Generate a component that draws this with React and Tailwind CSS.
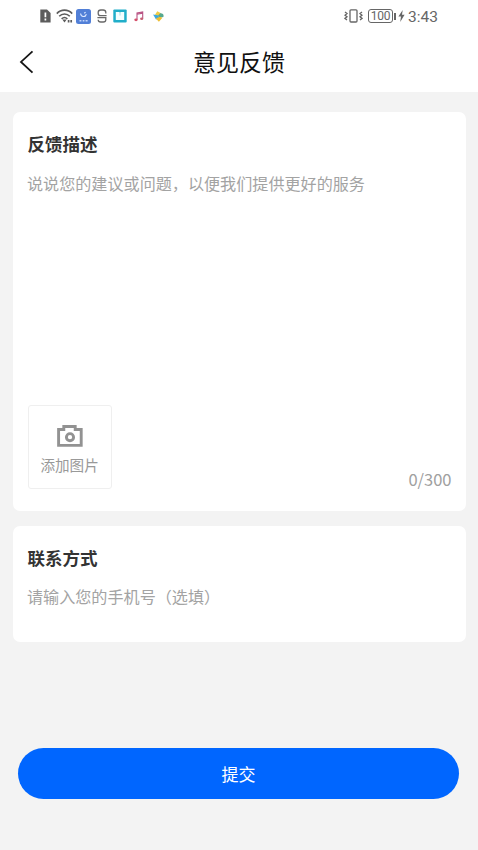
import React, { useState } from "react";

function NotificationIcons() {
  return (
    <div className="flex h-4 items-center text-[#5c5c5c]">
      <svg className="h-[14px] w-[11px]" viewBox="0 0 11 14">
        <path d="M0.3 0.5H7L10.6 4V13.5H0.3Z" fill="currentColor" />
        <path d="M5.4 3.4V8.2M5.4 9.6V11.4" stroke="#fff" strokeWidth="1.7" />
      </svg>
      <svg className="ml-[5px] h-[14px] w-[18px]" viewBox="0 0 18 14" fill="none" stroke="currentColor" strokeWidth="1.6">
        <path d="M0.8 4.6C5 0 12 0 16.2 4.6" />
        <path d="M3.2 7.3C6.2 4.2 10.8 4.2 13.8 7.3" />
        <path d="M5.6 9.8C7.4 8.2 9.6 8.2 11.4 9.8" />
        <path d="M6.3 10.5L8.5 13.5L10.7 10.5Z" fill="currentColor" stroke="none" />
        <path d="M12.6 11V13.4M15.2 11V13.4" strokeWidth="1.7" />
      </svg>
      <svg className="ml-[2px] h-[15px] w-[15px]" viewBox="0 0 15 15" fill="none">
        <rect x="0" y="0" width="15" height="15" rx="2.5" fill="#517fd7" />
        <path d="M4.6 4.5C5 8.3 9.2 8.6 10.4 5.2M8.2 4.2L9.6 3.2" stroke="#dce8ff" strokeWidth="1.1" />
        <path d="M3.5 11.7H5.4M6.7 11.7H8.4M9.6 11.7H11.6" stroke="#c2d5fa" strokeWidth="1.4" />
      </svg>
      <svg className="ml-[6px] h-[14px] w-[10px]" viewBox="0 0 10 14" fill="none" stroke="#686868" strokeWidth="1.3">
        <path d="M8.8 4.4V3.3C8.8 1.8 7.8 1 6.2 1H3.8C2.2 1 1.2 1.8 1.2 3.3V4.4C1.2 6 2.2 6.6 3.8 6.6H9.6M0.4 8.6H8.8V10.7C8.8 12.2 7.8 13 6.2 13H3.8C2.2 13 1.2 12.2 1.2 10.7" />
      </svg>
      <svg className="ml-[6px] h-[14px] w-[14px]" viewBox="0 0 14 14">
        <rect x="0.3" y="0.5" width="13.4" height="13" rx="1" fill="#20aec9" />
        <path d="M2.8 3H6.3L7 3.8L7.7 3H11.2V11H2.8Z" fill="#f3ffff" />
        <path d="M7 3.5V6.5" stroke="#8bd5e2" strokeWidth="0.8" />
      </svg>
      <svg className="ml-[7px] h-[11px] w-[10px]" viewBox="0 0 10 11">
        <path d="M3 8.6V2L8.7 0.9V7.5M3 3.2L8.7 2.1" fill="none" stroke="#b95484" strokeWidth="1.1" />
        <ellipse cx="2" cy="8.8" rx="1.7" ry="1.4" fill="#d44f6b" />
        <ellipse cx="7.7" cy="7.8" rx="1.6" ry="1.3" fill="#c65f73" />
      </svg>
      <svg className="ml-[9px] h-[11px] w-[11px]" viewBox="0 0 11 11">
        <path d="M4.3 0.2L8 2.2L6.5 5.5L2 3.8Z" fill="#efcb46" />
        <path d="M7.2 2.3C10 2 11.2 4 10.3 6L6.7 6.8L4.8 5Z" fill="#55a98f" />
        <path d="M0.1 3.6L4.8 4.3L6.8 7L3 8.4Z" fill="#3ca8dd" />
        <path d="M2.8 7.5L6.7 5.8L9.4 6.8L5.9 10.7Z" fill="#edbd32" />
      </svg>
    </div>
  );
}

function SystemIcons() {
  return (
    <div className="flex h-4 items-center text-[#666]">
      <svg className="h-[14px] w-[19px]" viewBox="0 0 19 14" fill="none" stroke="currentColor" strokeWidth="1.3">
        <rect x="6" y="0.8" width="7" height="12.2" rx="1" />
        <path d="M1 3L3 4.6L1 6.2L3 7.8L1 9.4L3 11M18 3L16 4.6L18 6.2L16 7.8L18 9.4L16 11" />
      </svg>
      <div className="ml-[5px] flex h-[14px] w-[25px] items-center justify-center rounded-[3px] border border-[#666] font-['Roboto',sans-serif] text-[12px] leading-none tracking-[-0.2px]">
        100
      </div>
      <div className="ml-px h-[7px] w-[2px] bg-[#666]" />
      <svg className="ml-[2px] h-[14px] w-[7px]" viewBox="0 0 7 14">
        <path d="M4.7 1L0.4 7.5H3L2.2 13L6.6 5.8H4Z" fill="currentColor" />
      </svg>
      <span className="ml-[3px] mt-px font-['Roboto',sans-serif] text-[15.5px] leading-4">3:43</span>
    </div>
  );
}

function CameraIcon() {
  return (
    <svg className="h-[22px] w-[26px]" viewBox="0 0 26 22" fill="none" stroke="#929292">
      <path d="M1.6 4.5H6.8V1.5H18.2V4.5H24.2V20.4H1.6Z" strokeWidth="2.9" />
      <circle cx="13" cy="12.2" r="3.6" strokeWidth="2.9" />
    </svg>
  );
}

export default function App() {
  const [description, setDescription] = useState("");
  const [phone, setPhone] = useState("");

  return (
    <div lang="zh-CN" className="flex h-[850px] w-[478px] flex-col overflow-hidden bg-[#f3f3f3] font-['Noto_Sans_CJK_SC',sans-serif]">
      <header className="h-[91.5px] shrink-0 bg-white">
        <div className="flex h-8 items-center justify-between pl-10 pr-10">
          <NotificationIcons />
          <SystemIcons />
        </div>
        <div className="grid h-[60px] grid-cols-[60px_1fr_60px] items-center">
          <button aria-label="返回" className="pl-[19px]">
            <svg className="h-6 w-4" viewBox="0 0 16 24" fill="none" stroke="#161616" strokeWidth="1.8">
              <path d="M13.5 1.3L2 11.9L13.5 22.6" />
            </svg>
          </button>
          <h1 className="-mt-0.5 text-center text-[23px] leading-8 text-[#111]">意见反馈</h1>
        </div>
      </header>

      <main className="flex flex-1 flex-col pt-5">
        <section className="ml-[12.5px] flex h-[399.5px] w-[453.5px] flex-col rounded-[7px] bg-white px-[14.5px] pt-5">
          <h2 className="pl-[0.5px] text-[17.5px] font-bold leading-6 text-[#333]">反馈描述</h2>
          <textarea
            className="mt-[15px] block h-[234px] w-full resize-none text-[16.1px] leading-6 text-[#333] outline-none placeholder:text-[#a3a3a3] placeholder:opacity-100"
            maxLength={300}
            placeholder="说说您的建议或问题，以便我们提供更好的服务"
            value={description}
            onChange={(e) => setDescription(e.target.value)}
          />
          <div className="flex items-end justify-between pl-[0.6px]">
            <button className="flex h-[84px] w-[84px] flex-col items-center rounded-[3px] border border-[#efefef] pt-[19px]">
              <CameraIcon />
              <span className="mt-2 text-[14.6px] leading-5 text-[#999]">添加图片</span>
            </button>
            <span className="-mb-[2px] text-[16.5px] leading-6 text-[#a0a0a0]">{description.length}/300</span>
          </div>
        </section>

        <section className="ml-[12.5px] mt-[15px] h-[116px] w-[453.5px] rounded-[7px] bg-white px-[14.5px] pt-5">
          <h2 className="pl-[0.5px] text-[17.5px] font-bold leading-6 text-[#333]">联系方式</h2>
          <input
            className="mt-[14px] block h-6 w-full text-[16.1px] leading-6 text-[#333] outline-none placeholder:text-[#a3a3a3] placeholder:opacity-100"
            type="tel"
            placeholder="请输入您的手机号（选填）"
            value={phone}
            onChange={(e) => setPhone(e.target.value)}
          />
        </section>

        <button className="ml-[18px] mt-[106px] h-[51px] w-[441px] rounded-full bg-[#0066ff] text-[17px] leading-6 text-white">
          提交
        </button>
      </main>
    </div>
  );
}
